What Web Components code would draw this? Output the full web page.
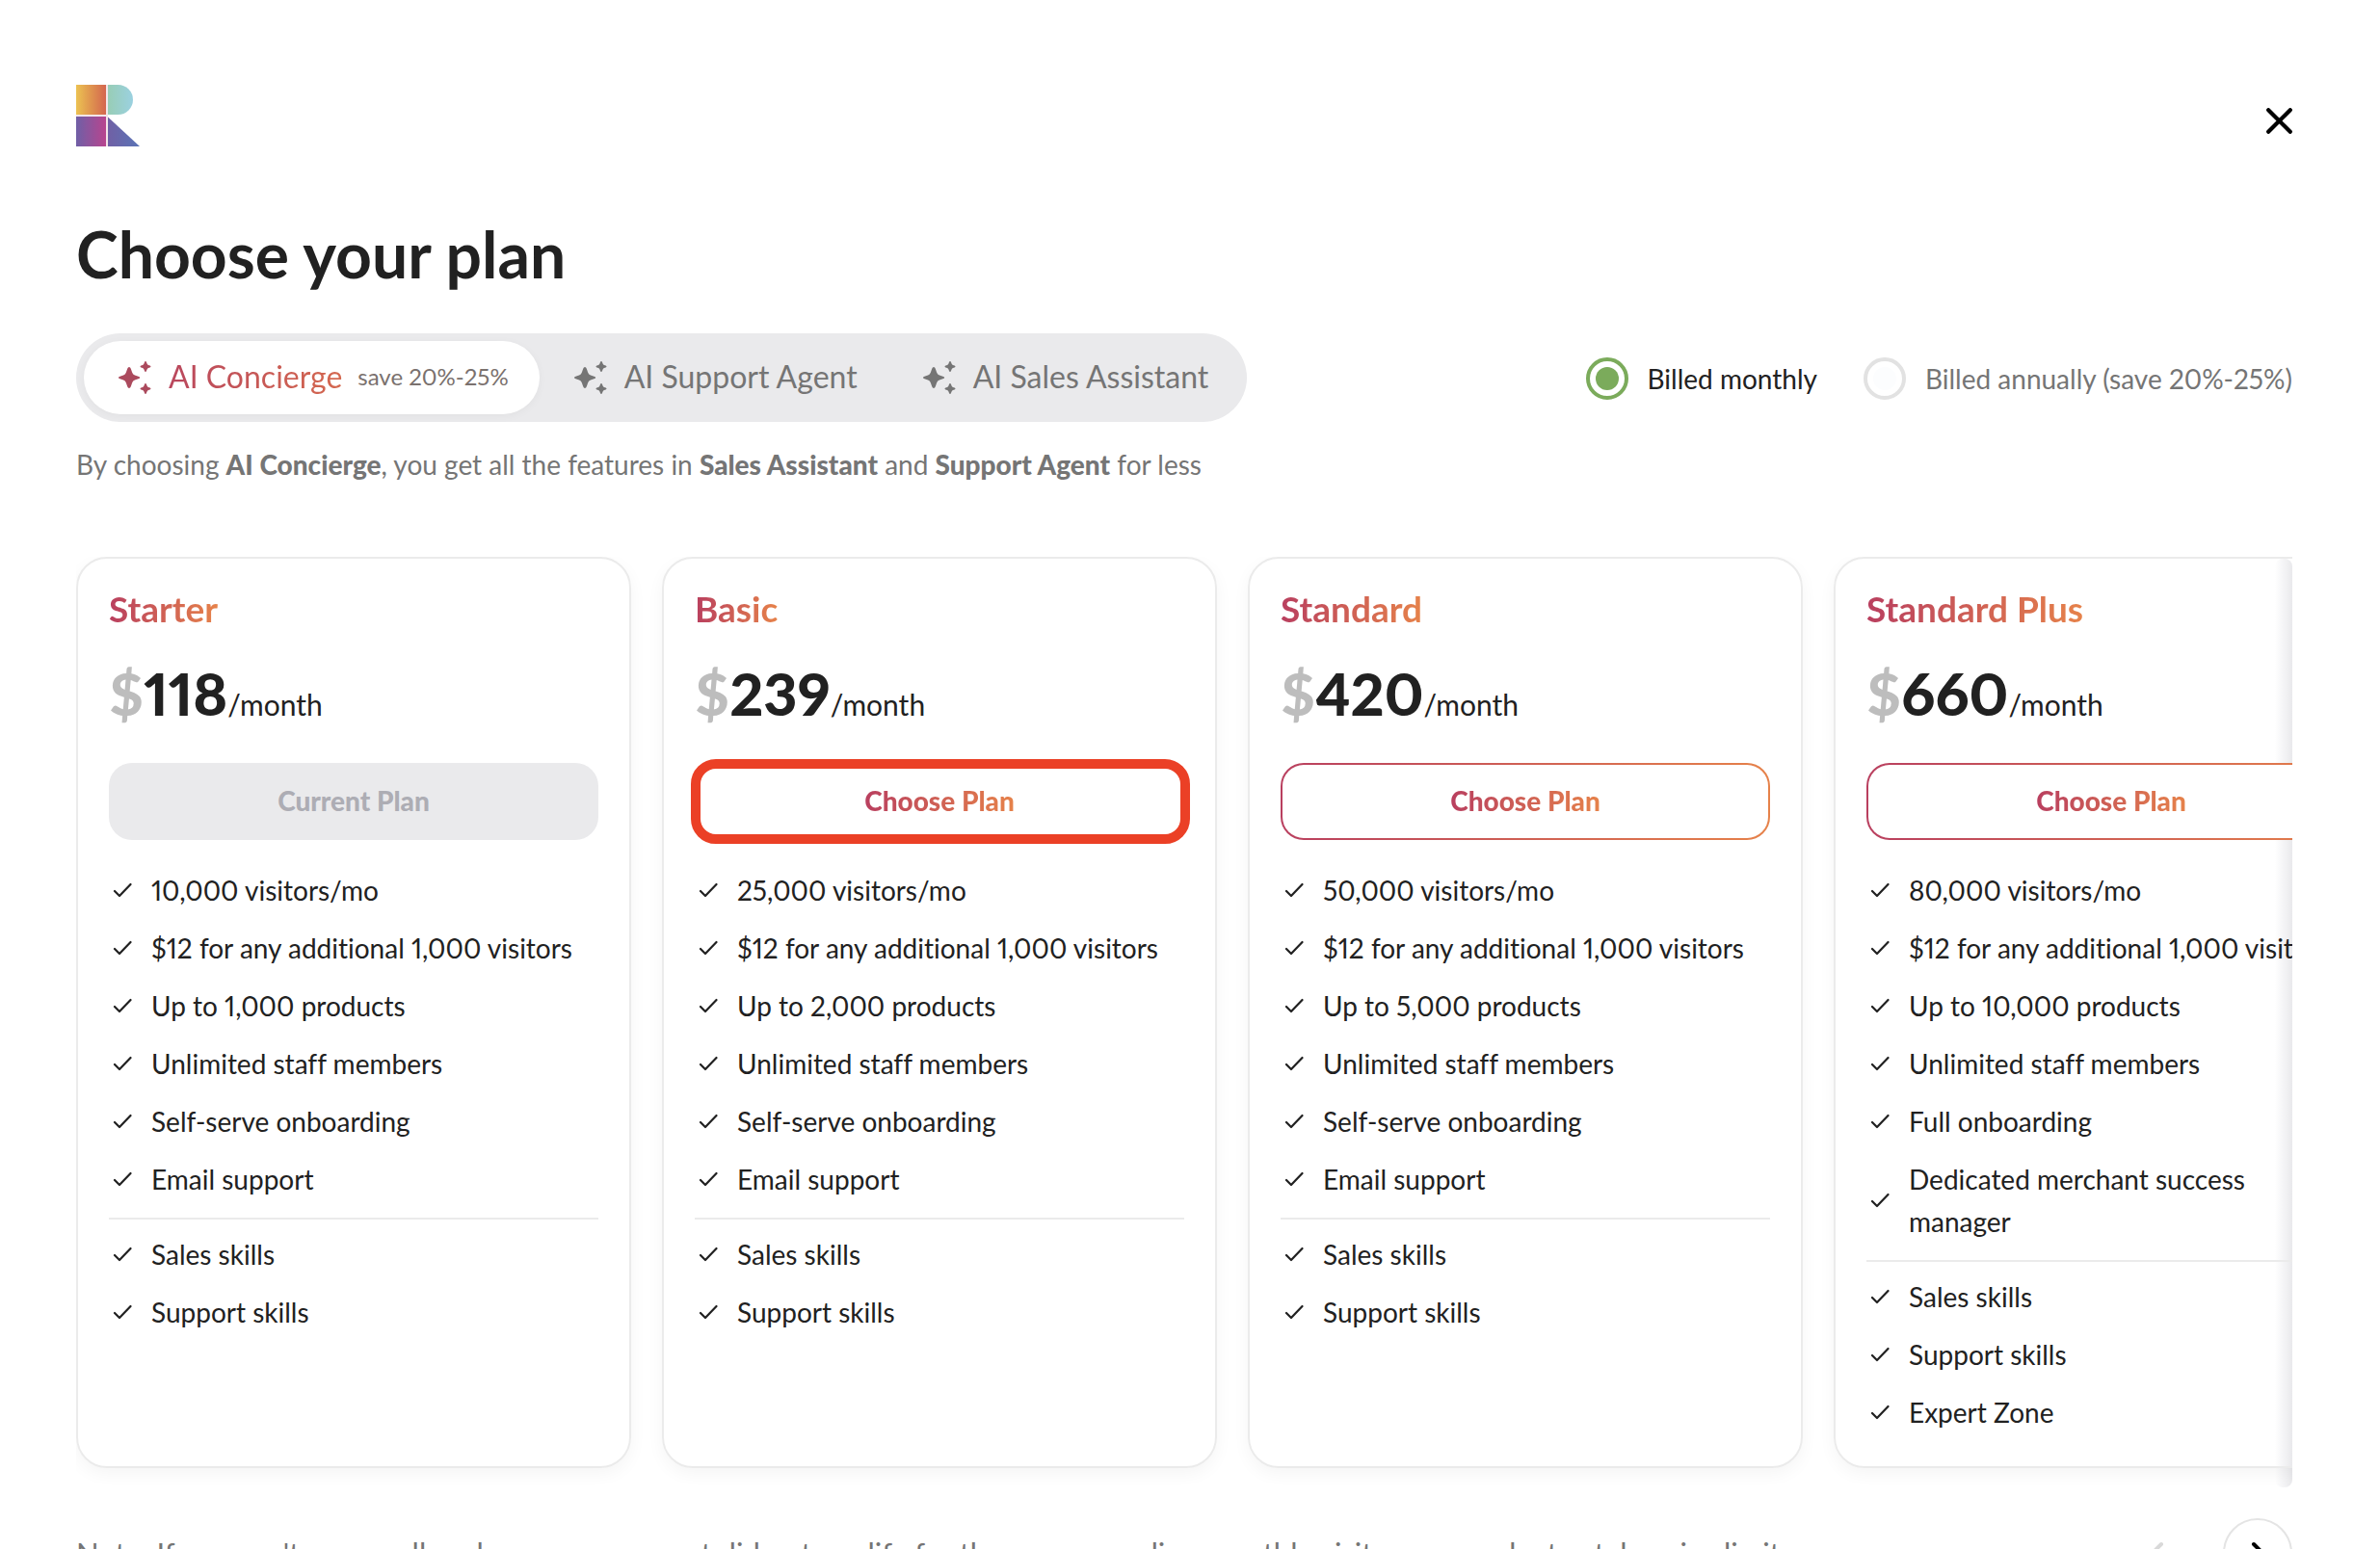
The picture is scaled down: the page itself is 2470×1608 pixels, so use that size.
<!DOCTYPE html>
<html lang="en">
<head>
<meta charset="utf-8">
<title>Choose your plan</title>
<style>
  html, body { margin: 0; height: 100%; overflow: hidden; background: #fff; }
  body {
    --ink: #212121;
    --muted: #757575;
    --line: #ebebeb;
    --soft: #eaeaec;
    --brand: linear-gradient(90deg, #b93f5f, #e6824a);
    font: 400 28px/44px Lato, "Open Sans", sans-serif;
    font-variant-ligatures: no-common-ligatures;
    font-variant-numeric: proportional-nums;
    color: var(--ink);
  }
</style>
</head>
<body>
<plan-picker>
  <plan-tabs slot="tabs">
    <plan-tab selected note="save 20%-25%">AI Concierge</plan-tab>
    <plan-tab>AI Support Agent</plan-tab>
    <plan-tab>AI Sales Assistant</plan-tab>
  </plan-tabs>
  <billing-toggle slot="billing"></billing-toggle>
  <plan-carousel slot="plans">
    <plan-card name="Starter" price="118" current>
      <plan-feature>10,000 visitors/mo</plan-feature>
      <plan-feature>$12 for any additional 1,000 visitors</plan-feature>
      <plan-feature>Up to 1,000 products</plan-feature>
      <plan-feature>Unlimited staff members</plan-feature>
      <plan-feature>Self-serve onboarding</plan-feature>
      <plan-feature>Email support</plan-feature>
      <plan-feature slot="skills">Sales skills</plan-feature>
      <plan-feature slot="skills">Support skills</plan-feature>
    </plan-card>
    <plan-card name="Basic" price="239" highlighted>
      <plan-feature>25,000 visitors/mo</plan-feature>
      <plan-feature>$12 for any additional 1,000 visitors</plan-feature>
      <plan-feature>Up to 2,000 products</plan-feature>
      <plan-feature>Unlimited staff members</plan-feature>
      <plan-feature>Self-serve onboarding</plan-feature>
      <plan-feature>Email support</plan-feature>
      <plan-feature slot="skills">Sales skills</plan-feature>
      <plan-feature slot="skills">Support skills</plan-feature>
    </plan-card>
    <plan-card name="Standard" price="420">
      <plan-feature>50,000 visitors/mo</plan-feature>
      <plan-feature>$12 for any additional 1,000 visitors</plan-feature>
      <plan-feature>Up to 5,000 products</plan-feature>
      <plan-feature>Unlimited staff members</plan-feature>
      <plan-feature>Self-serve onboarding</plan-feature>
      <plan-feature>Email support</plan-feature>
      <plan-feature slot="skills">Sales skills</plan-feature>
      <plan-feature slot="skills">Support skills</plan-feature>
    </plan-card>
    <plan-card name="Standard Plus" price="660">
      <plan-feature>80,000 visitors/mo</plan-feature>
      <plan-feature>$12 for any additional 1,000 visitors</plan-feature>
      <plan-feature>Up to 10,000 products</plan-feature>
      <plan-feature>Unlimited staff members</plan-feature>
      <plan-feature>Full onboarding</plan-feature>
      <plan-feature>Dedicated merchant success manager</plan-feature>
      <plan-feature slot="skills">Sales skills</plan-feature>
      <plan-feature slot="skills">Support skills</plan-feature>
      <plan-feature slot="skills">Expert Zone</plan-feature>
    </plan-card>
  </plan-carousel>
</plan-picker>

<script>
const define = (name, html, setup) => {
  const template = document.createElement('template');
  template.innerHTML = html;
  customElements.define(name, class extends HTMLElement {
    constructor() {
      super();
      this.attachShadow({ mode: 'open' }).append(template.content.cloneNode(true));
    }
    connectedCallback() { if (setup) setup(this, this.shadowRoot); }
  });
};

define('brand-logo', `
  <style>:host { display: block; width: 66px; height: 64px; } svg { display: block; }</style>
  <svg width="66" height="64" viewBox="0 0 66 64" role="img" aria-label="Logo">
    <defs>
      <linearGradient id="sun"><stop stop-color="#ecc252"/><stop offset=".45" stop-color="#e0984f"/><stop offset="1" stop-color="#d4664f"/></linearGradient>
      <linearGradient id="sea"><stop stop-color="#98cdb6"/><stop offset="1" stop-color="#9bd1e0"/></linearGradient>
      <linearGradient id="plum"><stop stop-color="#6f5fa6"/><stop offset="1" stop-color="#b8458f"/></linearGradient>
      <linearGradient id="dusk"><stop stop-color="#7060a5"/><stop offset="1" stop-color="#5a74b6"/></linearGradient>
    </defs>
    <path fill="#f3e6ea" d="M31 0h2v64h-2zM0 31h31v2H0z"/>
    <path fill="url(#sun)" d="M0 0h31v31H0z"/>
    <path fill="url(#sea)" d="M33 0h10.500a15.500 15.500 0 0 1 0 31H33z"/>
    <path fill="url(#plum)" d="M0 33h31v31H0z"/>
    <path fill="url(#dusk)" d="M33 33.500 66 64H33z"/>
  </svg>`);

define('plan-tabs', `
  <style>
    :host { display: flex; padding: 8px; border-radius: 46px; background: var(--soft); }
  </style>
  <slot></slot>`);

define('plan-tab', `
  <style>
    :host { display: block; }
    button {
      display: flex; align-items: center; height: 76px; padding: 0 32px 0 36px;
      border: 0; border-radius: 38px; background: none; color: var(--muted);
      font: inherit; font-size: 32px; white-space: nowrap; cursor: pointer;
    }
    svg { margin-right: 18px; fill: currentColor; }
    .label, small { padding-bottom: 2px; }
    small { display: none; margin-left: 16px; font-size: 24px; color: #7a716e; }
    :host([note]) small { display: block; }
    :host([selected]) button { background: #fff; color: #ab4a5d; box-shadow: 0 2px 10px rgba(0, 0, 0, .04); }
    :host([selected]) .label {
      background: linear-gradient(90deg, #b9475d, #d4684f);
      -webkit-background-clip: text; background-clip: text; color: transparent;
    }
  </style>
  <button type="button">
    <svg width="34" height="34" viewBox="0 0 34 34" aria-hidden="true">
      <path d="M11 6q1.200 0 1.800 1.800l1.400 4q.7 2 2.700 2.700l3.600 1.200q1.700.6 1.700 1.300t-1.700 1.300l-3.600 1.200q-2 .7-2.700 2.700l-1.400 4Q12.200 28 11 28t-1.800-1.800l-1.400-4q-.7-2-2.700-2.700l-3.600-1.200Q0 17.700 0 17t1.500-1.300l3.600-1.200q2-.7 2.700-2.700l1.400-4Q9.800 6 11 6z"/>
      <path d="M28 0q.7 0 1 .9l.7 1.800q.4 1 1.300 1.300l1.600.6q.9.300.9.900t-.9.900L31 7q-.9.300-1.300 1.300L29 10.100q-.3.900-1 .9t-1-.9l-.7-1.800Q25.900 7.300 25 7l-1.600-.6q-.9-.3-.9-.9t.9-.9L25 4q.9-.3 1.300-1.300L27 .9q.3-.9 1-.9z"/>
      <path d="M28 23q.7 0 1 .9l.7 1.800q.4 1 1.300 1.300l1.600.6q.9.300.9.900t-.9.900L31 30q-.9.300-1.300 1.300l-.7 1.800q-.3.900-1 .9t-1-.9l-.7-1.800q-.4-1-1.300-1.300l-1.600-.6q-.9-.3-.9-.9t.9-.9L25 27q.9-.3 1.300-1.300l.7-1.800q.3-.9 1-.9z"/>
    </svg>
    <span class="label"><slot></slot></span>
    <small></small>
  </button>`, (host, root) => {
  root.querySelector('small').textContent = host.getAttribute('note') || '';
  root.querySelector('button').setAttribute('aria-pressed', host.hasAttribute('selected'));
});

define('billing-toggle', `
  <style>
    :host { display: flex; gap: 48px; padding-top: 2px; }
    label { display: flex; align-items: center; gap: 20px; color: var(--muted); white-space: nowrap; cursor: pointer; }
    label:has(:checked) { color: var(--ink); }
    input {
      appearance: none; box-sizing: border-box; width: 44px; height: 44px; margin: 0; padding: 6px;
      border: 4px solid #e2e2e2; border-radius: 50%; background: #fcfdfe content-box;
    }
    input:checked { border-color: #7bab5b; background: #7bab5b content-box; }
  </style>
  <label><input type="radio" name="billing" value="monthly" checked>Billed monthly</label>
  <label><input type="radio" name="billing" value="annual">Billed annually (save 20%-25%)</label>`);

define('plan-feature', `
  <style>
    :host { display: flex; align-items: center; gap: 20px; padding: 8px 16px 8px 0; }
    svg { flex: none; margin-left: 4px; }
  </style>
  <svg width="20" height="16" viewBox="0 0 20 16" fill="none" stroke="currentColor" stroke-width="2.200" stroke-linecap="round" stroke-linejoin="round" aria-hidden="true"><path d="M2 9l5 5L18.500 2"/></svg>
  <span><slot></slot></span>`);

define('plan-card', `
  <style>
    :host {
      display: block; box-sizing: border-box; padding: 30px 32px 26px;
      border: 2px solid var(--line); border-radius: 32px; box-shadow: 0 6px 18px rgba(0, 0, 0, .045);
    }
    h2 {
      width: fit-content; margin: 0; font-size: 37px; line-height: 44px; font-weight: 700;
      background: var(--brand); -webkit-background-clip: text; background-clip: text; color: transparent;
    }
    .price { display: flex; align-items: baseline; height: 84px; margin: 24px 0 30px; font-size: 30px; line-height: 84px; }
    .price b { font-size: 61px; font-weight: 900; }
    .price .sign { color: #bdbdbd; }
    button {
      position: relative; display: block; width: 100%; height: 80px; padding: 0 0 2px;
      border: 2px solid transparent; border-radius: 24px;
      background: linear-gradient(#fff, #fff) padding-box, var(--brand) border-box;
      font: inherit; font-weight: 900; cursor: pointer;
    }
    button span { background: var(--brand); -webkit-background-clip: text; background-clip: text; color: transparent; }
    button:disabled { border: 0; background: var(--soft); cursor: default; }
    button:disabled span { background: none; color: #adadb4; }
    :host([highlighted]) button::after {
      content: ""; position: absolute; inset: -6px -8px -6px -6px;
      border: 10px solid #eb4026; border-radius: 26px;
    }
    .features { margin-top: 22px; }
    hr { height: 2px; margin: 10px 0 6px; border: 0; background: var(--line); }
  </style>
  <h2></h2>
  <div class="price"><b class="sign">$</b><b class="amount"></b><span>/month</span></div>
  <button type="button"><span></span></button>
  <div class="features"><slot></slot></div>
  <hr>
  <div><slot name="skills"></slot></div>`, (host, root) => {
  const current = host.hasAttribute('current');
  root.querySelector('h2').textContent = host.getAttribute('name');
  root.querySelector('.amount').textContent = host.getAttribute('price');
  root.querySelector('button').disabled = current;
  root.querySelector('button span').textContent = current ? 'Current Plan' : 'Choose Plan';
});

define('plan-carousel', `
  <style>
    :host {
      position: relative; isolation: isolate; display: grid; grid-auto-flow: column;
      grid-auto-columns: 576px; gap: 32px; padding-bottom: 20px; overflow: hidden;
    }
    /* edge fade that hints at more plans to the right */
    :host::after {
      content: ""; position: absolute; z-index: -1; inset: 2px 0 0 auto; width: 18px;
      border-radius: 8px; background: linear-gradient(90deg, rgba(232, 232, 236, 0), #e9e9ec);
    }
  </style>
  <slot></slot>`);

define('carousel-nav', `
  <style>
    :host { display: flex; gap: 32px; }
    button {
      display: grid; place-items: center; width: 72px; height: 72px; padding: 0;
      border: 2px solid #e4e4e4; border-radius: 50%; background: #fff; color: #000; cursor: pointer;
    }
    button:disabled { border-color: transparent; color: #d9d9d9; }
    svg { fill: none; stroke: currentColor; stroke-width: 4; stroke-linecap: round; stroke-linejoin: round; }
  </style>
  <button type="button" aria-label="Previous plans" disabled><svg width="24" height="24" viewBox="0 0 24 24"><path d="M16 3 7 12l9 9"/></svg></button>
  <button type="button" aria-label="Next plans"><svg width="24" height="24" viewBox="0 0 24 24"><path d="M8 3l9 9-9 9"/></svg></button>`);

define('plan-picker', `
  <style>
    :host { display: block; box-sizing: border-box; height: 100vh; padding: 88px 91px 0 79px; overflow: hidden; }
    header { display: flex; justify-content: space-between; }
    .close { display: grid; place-items: center; width: 27px; height: 74px; padding: 0; border: 0; background: none; cursor: pointer; }
    h1 { margin: 62px 0 42px; font-size: 66px; line-height: 80px; font-weight: 700; }
    .controls { display: flex; align-items: center; justify-content: space-between; gap: 32px; }
    .hint { margin: 22px 0 74px; color: var(--muted); }
    .hint b { font-weight: 900; }
    footer { display: flex; align-items: center; justify-content: space-between; gap: 32px; margin-top: 32px; color: var(--muted); }
    footer p { margin: 0; font-size: 31px; }
  </style>
  <header>
    <brand-logo></brand-logo>
    <button class="close" type="button" aria-label="Close">
      <svg width="27" height="27" viewBox="0 0 27 27" stroke="#000" stroke-width="4.200" stroke-linecap="round"><path d="M2.200 2.200l22.600 22.600M24.800 2.200 2.200 24.800"/></svg>
    </button>
  </header>
  <main>
    <h1>Choose your plan</h1>
    <div class="controls"><slot name="tabs"></slot><slot name="billing"></slot></div>
    <p class="hint">By choosing <b>AI Concierge</b>, you get all the features in <b>Sales Assistant</b> and <b>Support Agent</b> for less</p>
    <slot name="plans"></slot>
  </main>
  <footer>
    <p>Note: If you can't see smaller plans, your account did not qualify for the corresponding monthly visitors or product catalog size limit</p>
    <carousel-nav></carousel-nav>
  </footer>`);
</script>
</body>
</html>
